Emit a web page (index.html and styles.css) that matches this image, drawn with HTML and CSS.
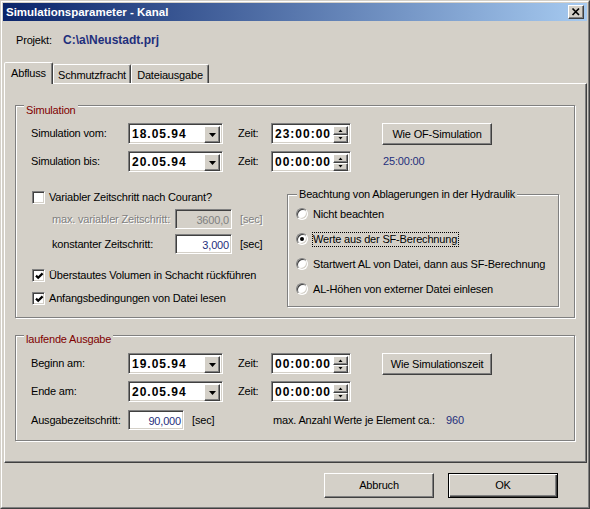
FILE: index.html
```html
<!DOCTYPE html>
<html>
<head>
<meta charset="utf-8">
<link rel="stylesheet" href="styles.css">
</head>
<body>
<div class="window">
<div class="window-inner">
  <div class="titlebar">
    <span class="title">Simulationsparameter - Kanal</span>
    <span class="close raised"><svg width="14" height="12" viewBox="0 0 14 12"><path d="M3.5 2.5 L10 9 M10 2.5 L3.5 9" stroke="#000" stroke-width="1.7" fill="none"/></svg></span>
  </div>

  <div class="project"><span class="proj-label">Projekt:</span><span class="proj-path">C:\a\Neustadt.prj</span></div>

  <div class="tabs">
    <div class="tab active">Abfluss</div>
    <div class="tab">Schmutzfracht</div>
    <div class="tab">Dateiausgabe</div>
  </div>

  <div class="panel">
    <div class="group g-sim">
      <div class="legend lg-sim">Simulation</div>

      <div class="row r1">
        <span class="lbl">Simulation vom:</span>
        <div class="combo sunken"><span class="ctext">18.05.94</span><span class="dd raised"><svg width="7" height="4" viewBox="0 0 7 4"><polygon points="0,0 7,0 3.5,4" fill="#000"/></svg></span></div>
        <span class="zeit">Zeit:</span>
        <div class="time sunken"><span class="ctext">23:00:00</span><span class="spin"><span class="sb raised"><svg width="5" height="3" viewBox="0 0 5 3"><polygon points="0.5,3 4.5,3 2.5,0.5" fill="#000"/></svg></span><span class="sb raised"><svg width="5" height="3" viewBox="0 0 5 3"><polygon points="0.5,0 4.5,0 2.5,2.5" fill="#000"/></svg></span></span></div>
        <span class="btn raised">Wie OF-Simulation</span>
      </div>

      <div class="row r2">
        <span class="lbl">Simulation bis:</span>
        <div class="combo sunken"><span class="ctext">20.05.94</span><span class="dd raised"><svg width="7" height="4" viewBox="0 0 7 4"><polygon points="0,0 7,0 3.5,4" fill="#000"/></svg></span></div>
        <span class="zeit">Zeit:</span>
        <div class="time sunken"><span class="ctext">00:00:00</span><span class="spin"><span class="sb raised"><svg width="5" height="3" viewBox="0 0 5 3"><polygon points="0.5,3 4.5,3 2.5,0.5" fill="#000"/></svg></span><span class="sb raised"><svg width="5" height="3" viewBox="0 0 5 3"><polygon points="0.5,0 4.5,0 2.5,2.5" fill="#000"/></svg></span></span></div>
        <span class="dur navy">25:00:00</span>
      </div>

      <div class="mid">
        <div class="left-col">
          <div class="cb-row"><span class="cb sunken"></span><span>Variabler Zeitschritt nach Courant?</span></div>
          <div class="field-row fr1">
            <span class="flbl disabled">max. variabler Zeitschritt:</span>
            <span class="num sunken dis">3600,0</span>
            <span class="unit disabled">[sec]</span>
          </div>
          <div class="field-row fr2">
            <span class="flbl">konstanter Zeitschritt:</span>
            <span class="num sunken navy">3,000</span>
            <span class="unit">[sec]</span>
          </div>
          <div class="cb-row cb2"><span class="cb sunken"><svg width="9" height="9" viewBox="0 0 9 9"><polyline points="1,3.6 3.2,5.8 7.6,1.4" stroke="#000" stroke-width="2.2" fill="none"/></svg></span><span>Überstautes Volumen in Schacht rückführen</span></div>
          <div class="cb-row cb3"><span class="cb sunken"><svg width="9" height="9" viewBox="0 0 9 9"><polyline points="1,3.6 3.2,5.8 7.6,1.4" stroke="#000" stroke-width="2.2" fill="none"/></svg></span><span>Anfangsbedingungen von Datei lesen</span></div>
        </div>

        <div class="group g-radio">
          <div class="legend lg-radio">Beachtung von Ablagerungen in der Hydraulik</div>
          <div class="radio-row rr1"><span class="radio"></span><span class="rlbl">Nicht beachten</span></div>
          <div class="radio-row"><span class="radio on"><span class="dot"></span></span><span class="rlbl focus">Werte aus der SF-Berechnung</span></div>
          <div class="radio-row"><span class="radio"></span><span class="rlbl">Startwert AL von Datei, dann aus SF-Berechnung</span></div>
          <div class="radio-row"><span class="radio"></span><span class="rlbl">AL-Höhen von externer Datei einlesen</span></div>
        </div>
      </div>
    </div>

    <div class="group g-out">
      <div class="legend lg-out">laufende Ausgabe</div>

      <div class="row r1o">
        <span class="lbl">Beginn am:</span>
        <div class="combo sunken"><span class="ctext">19.05.94</span><span class="dd raised"><svg width="7" height="4" viewBox="0 0 7 4"><polygon points="0,0 7,0 3.5,4" fill="#000"/></svg></span></div>
        <span class="zeit">Zeit:</span>
        <div class="time sunken"><span class="ctext">00:00:00</span><span class="spin"><span class="sb raised"><svg width="5" height="3" viewBox="0 0 5 3"><polygon points="0.5,3 4.5,3 2.5,0.5" fill="#000"/></svg></span><span class="sb raised"><svg width="5" height="3" viewBox="0 0 5 3"><polygon points="0.5,0 4.5,0 2.5,2.5" fill="#000"/></svg></span></span></div>
        <span class="btn raised">Wie Simulationszeit</span>
      </div>

      <div class="row r2">
        <span class="lbl">Ende am:</span>
        <div class="combo sunken"><span class="ctext">20.05.94</span><span class="dd raised"><svg width="7" height="4" viewBox="0 0 7 4"><polygon points="0,0 7,0 3.5,4" fill="#000"/></svg></span></div>
        <span class="zeit">Zeit:</span>
        <div class="time sunken"><span class="ctext">00:00:00</span><span class="spin"><span class="sb raised"><svg width="5" height="3" viewBox="0 0 5 3"><polygon points="0.5,3 4.5,3 2.5,0.5" fill="#000"/></svg></span><span class="sb raised"><svg width="5" height="3" viewBox="0 0 5 3"><polygon points="0.5,0 4.5,0 2.5,2.5" fill="#000"/></svg></span></span></div>
      </div>

      <div class="row r3">
        <span class="lbl">Ausgabezeitschritt:</span>
        <span class="num num2 sunken navy">90,000</span>
        <span class="unit unit2">[sec]</span>
        <span class="maxlbl">max. Anzahl Werte je Element ca.:</span>
        <span class="navy">960</span>
      </div>
    </div>
  </div>

  <div class="buttons">
    <span class="pbtn raised">Abbruch</span>
    <span class="pbtn default">OK</span>
  </div>
</div>
</div>
</body>
</html>
```

FILE: styles.css
```css
* { box-sizing: border-box; }
html, body { margin: 0; padding: 0; }
body {
  width: 590px;
  height: 509px;
  overflow: hidden;
  background: #d4d0c8;
  font-family: "Liberation Sans", Arial, sans-serif;
  font-size: 11px;
  letter-spacing: -0.18px;
  color: #000;
}
.window {
  width: 590px;
  height: 509px;
  border: 1px solid;
  border-color: #d4d0c8 #404040 #404040 #d4d0c8;
}
.window-inner {
  height: 100%;
  border: 1px solid;
  border-color: #fff #808080 #808080 #fff;
  padding: 1px;
  display: flex;
  flex-direction: column;
}

/* shared 3D styles */
.raised {
  border: 1px solid;
  border-color: #fff #404040 #404040 #fff;
  box-shadow: inset -1px -1px #808080;
  background: #d4d0c8;
}
.sunken {
  border: 1px solid;
  border-color: #808080 #fff #fff #808080;
  box-shadow: inset 1px 1px #404040, inset -1px -1px #d4d0c8;
  background: #fff;
}
.navy { color: #1f2f7c; }
.disabled { color: #808080; text-shadow: 1px 1px #fff; }

/* title bar */
.titlebar {
  height: 18px;
  flex: none;
  display: flex;
  align-items: center;
  padding-left: 3px;
  background: linear-gradient(to right, #0a246a, #a6caf0);
}
.title {
  flex: 1;
  color: #fff;
  font-weight: bold;
  font-size: 11.5px;
  letter-spacing: 0;
}
.close {
  width: 16px;
  height: 14px;
  margin-right: 3px;
  display: flex;
  align-items: center;
  justify-content: center;
}
.close svg { display: block; }

/* project line */
.project {
  margin-top: 12px;
  height: 14px;
  line-height: 14px;
  padding-left: 13px;
  display: flex;
  flex: none;
}
.proj-label { width: 47px; }
.proj-path {
  color: #1f2f7c;
  font-weight: bold;
  font-size: 12px;
  letter-spacing: 0;
}

/* tabs */
.tabs {
  margin-top: 15px;
  height: 21px;
  flex: none;
  display: flex;
  align-items: flex-start;
  padding-left: 1px;
}
.tab {
  width: 78px;
  height: 19px;
  margin-top: 2px;
  border: 1px solid;
  border-bottom: none;
  border-color: #fff #404040 transparent #fff;
  border-radius: 2px 2px 0 0;
  box-shadow: inset -1px 0 #808080;
  padding-top: 3px;
  line-height: 14px;
  text-align: center;
  background: #d4d0c8;
}
.tab.active {
  width: 49px;
  height: 22px;
  margin-top: 0;
  position: relative;
  z-index: 1;
}

/* panel */
.panel {
  flex: none;
  margin-left: 1px;
  width: 583px;
  height: 380px;
  border: 1px solid;
  border-color: #fff #404040 #404040 #fff;
  box-shadow: inset -1px -1px #808080;
}

/* group boxes */
.group {
  border: 1px solid #808080;
  box-shadow: inset 1px 1px #fff, 1px 1px #fff;
}
.legend {
  width: max-content;
  height: 13px;
  line-height: 13px;
  padding: 0 2px;
  background: #d4d0c8;
  color: #800000;
}
.g-sim { margin: 21px 0 0 10px; width: 560px; height: 213px; }
.lg-sim { margin: -2px 0 0 8px; }
.g-out { margin: 17px 0 0 10px; width: 560px; height: 106px; }
.lg-out { margin: -3px 0 0 8px; }

/* rows */
.row {
  display: flex;
  align-items: flex-start;
  height: 21px;
  margin-left: 15px;
}
.r1 { margin-top: 6px; }
.r1o { margin-top: 7px; }
.r2 { margin-top: 7px; }
.r3 { margin-top: 8px; height: 20px; align-items: center; }
.lbl { width: 97px; line-height: 21px; }
.r3 .lbl { line-height: 20px; }

.combo, .time {
  height: 21px;
  display: flex;
  align-items: flex-start;
  padding: 2px;
}
.combo { width: 95px; }
.time { width: 80px; margin-left: 0; }
.ctext {
  flex: 1;
  padding-left: 1px;
  font-weight: bold;
  font-size: 12px;
  letter-spacing: 1px;
  line-height: 17px;
}
.dd {
  width: 16px;
  height: 17px;
  display: flex;
  align-items: center;
  justify-content: center;
}
.dd svg, .sb svg { display: block; }
.spin {
  width: 15px;
  height: 17px;
  display: flex;
  flex-direction: column;
}
.sb {
  flex: 1;
  display: flex;
  align-items: center;
  justify-content: center;
}
.zeit {
  margin-left: 15px;
  width: 33px;
  line-height: 21px;
}
.btn {
  margin-left: 31px;
  width: 110px;
  height: 22px;
  line-height: 20px;
  text-align: center;
}
.dur {
  margin-left: 32px;
  line-height: 21px;
}

/* middle area */
.mid {
  display: flex;
  margin-top: 16px;
}
.left-col {
  width: 255px;
  margin-left: 16px;
}
.cb-row {
  display: flex;
  align-items: center;
  height: 18px;
}
.cb2 { margin-top: 12px; }
.cb3 { margin-top: 5px; }
.cb {
  width: 13px;
  height: 13px;
  margin-right: 4px;
  padding: 2px;
  flex: none;
}
.cb svg { display: block; }
.field-row {
  display: flex;
  align-items: center;
  height: 20px;
  margin-left: 20px;
}
.fr1 { margin-top: 3px; }
.fr2 { margin-top: 5px; }
.flbl { width: 123px; }
.num {
  width: 57px;
  height: 20px;
  padding: 2px 2px 0 2px;
  line-height: 16px;
  text-align: right;
  flex: none;
}
.num.dis { background: #d4d0c8; color: #808080; }
.num2 { width: 56px; }
.unit { margin-left: 8px; }
.unit2 { width: 81px; }
.maxlbl { width: 173px; }

/* radio group */
.g-radio {
  width: 272px;
  height: 113px;
  margin-top: 6px;
}
.lg-radio { margin: -7px 0 0 9px; color: #000; }
.radio-row {
  display: flex;
  align-items: center;
  height: 18px;
  padding-left: 8px;
  margin-top: 7px;
}
.radio-row.rr1 { margin-top: 4px; }
.radio {
  width: 12px;
  height: 12px;
  flex: none;
  border-radius: 50%;
  border: 1px solid;
  border-color: #808080 #fff #fff #808080;
  box-shadow: inset 1px 1px #404040, inset -1px -1px #d4d0c8;
  background: #fff;
  margin-right: 4px;
  display: flex;
  align-items: center;
  justify-content: center;
}
.dot {
  width: 4px;
  height: 4px;
  border-radius: 50%;
  background: #000;
}
.rlbl {
  border: 1px dotted transparent;
  line-height: 13px;
  padding-right: 1px;
}
.rlbl.focus { border-color: #000; }

/* bottom buttons */
.buttons {
  flex: none;
  display: flex;
  justify-content: flex-end;
  gap: 14px;
  margin-top: 10px;
  padding-right: 29px;
}
.pbtn {
  width: 110px;
  height: 25px;
  line-height: 23px;
  text-align: center;
}
.default {
  border: 1px solid #000;
  box-shadow: inset 1px 1px #fff, inset -1px -1px #404040, inset -2px -2px #808080;
  background: #d4d0c8;
}
```
